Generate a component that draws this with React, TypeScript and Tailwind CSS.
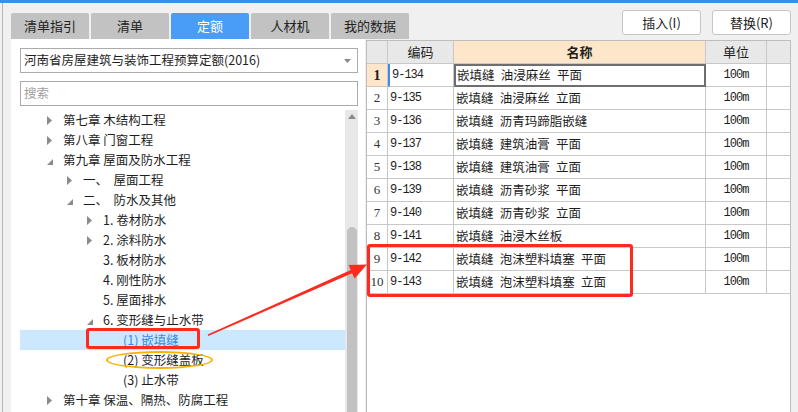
import React from "react";

const tabs = ["清单指引", "清单", "定额", "人材机", "我的数据"];

type Node = { level: 1 | 2 | 3 | 4; text: string; state?: "open" | "closed"; selected?: boolean };

const tree: Node[] = [
  { level: 1, text: "第七章 木结构工程", state: "closed" },
  { level: 1, text: "第八章 门窗工程", state: "closed" },
  { level: 1, text: "第九章 屋面及防水工程", state: "open" },
  { level: 2, text: "一、  屋面工程", state: "closed" },
  { level: 2, text: "二、  防水及其他", state: "open" },
  { level: 3, text: "1. 卷材防水", state: "closed" },
  { level: 3, text: "2. 涂料防水", state: "closed" },
  { level: 3, text: "3. 板材防水" },
  { level: 3, text: "4. 刚性防水" },
  { level: 3, text: "5. 屋面排水" },
  { level: 3, text: "6. 变形缝与止水带", state: "open" },
  { level: 4, text: "(1) 嵌填缝", selected: true },
  { level: 4, text: "(2) 变形缝盖板" },
  { level: 4, text: "(3) 止水带" },
  { level: 1, text: "第十章 保温、隔热、防腐工程", state: "closed" },
];

const indent: Record<number, string> = {
  1: "pl-[24px]",
  2: "pl-[44px]",
  3: "pl-[64px]",
  4: "pl-[84px]",
};

const rows = [
  ["9-134", "嵌填缝 油浸麻丝 平面"],
  ["9-135", "嵌填缝 油浸麻丝 立面"],
  ["9-136", "嵌填缝 沥青玛蹄脂嵌缝"],
  ["9-137", "嵌填缝 建筑油膏 平面"],
  ["9-138", "嵌填缝 建筑油膏 立面"],
  ["9-139", "嵌填缝 沥青砂浆 平面"],
  ["9-140", "嵌填缝 沥青砂浆 立面"],
  ["9-141", "嵌填缝 油浸木丝板"],
  ["9-142", "嵌填缝 泡沫塑料填塞 平面"],
  ["9-143", "嵌填缝 泡沫塑料填塞 立面"],
];

function Toggle({ state }: { state?: "open" | "closed" }) {
  if (state === "closed")
    return (
      <svg width="6" height="9" viewBox="0 0 6 9" className="ml-[3px]">
        <path d="M0 0 L5 4.5 L0 9 Z" fill="#8a8a8a" />
      </svg>
    );
  if (state === "open")
    return (
      <svg width="6" height="6" viewBox="0 0 6 6" className="ml-[3px] mt-[4px]">
        <path d="M6 0 L6 6 L0 6 Z" fill="#8a8a8a" />
      </svg>
    );
  return null;
}

export default function App() {
  return (
    <div className="relative w-[798px] h-[412px] overflow-hidden bg-[#f0f0f0] font-['Noto_Sans_CJK_SC',sans-serif] text-[12px] text-[#1e1e1e]">
      <div className="h-[3px] bg-[#3d8fe6]" />
      <div className="flex h-[409px]">
        <div className="w-[3px] shrink-0 border-r border-[#b4b4b4]" />

        {/* left: library tree */}
        <div className="ml-[8px] w-[354px] shrink-0 flex flex-col">
          <div className="mt-[10px] h-[26px] flex gap-[2px]">
            {tabs.map((t, i) => (
              <div
                key={t}
                className={
                  i === 2
                    ? "w-[78px] shrink-0 rounded-t-[2px] bg-[#4a9df6] text-white text-[13px] flex items-center justify-center"
                    : "w-[78px] shrink-0 rounded-t-[2px] bg-[#c2c2c2] text-[#222] text-[13px] flex items-center justify-center"
                }
              >
                {t}
              </div>
            ))}
          </div>
          <div className="flex-1 bg-white pt-[9px] pl-[9px] pr-[7px] flex flex-col">
            <div className="h-[25px] border border-[#ababab] flex items-center justify-between pl-[3px] pr-[6px] text-[12.5px]">
              <span>河南省房屋建筑与装饰工程预算定额(2016)</span>
              <svg width="7" height="4" viewBox="0 0 7 4">
                <path d="M0 0 L7 0 L3.5 4 Z" fill="#888" />
              </svg>
            </div>
            <div className="mt-[8px] h-[25px] border border-[#ababab] flex items-center pl-[3px] text-[#a0a0a0] text-[12.5px]">
              搜索
            </div>
            <div className="mt-[4px] flex flex-1">
              <div className="w-[325px] text-[12.5px]">
                {tree.map((n) => (
                  <div
                    key={n.text}
                    className={
                      "h-[20px] flex items-center " +
                      indent[n.level] +
                      (n.selected ? " bg-[#cce8ff] text-[#3b8ae4]" : "")
                    }
                  >
                    <div className="w-[19px] h-[20px] flex items-center">
                      <Toggle state={n.state} />
                    </div>
                    <span className="whitespace-pre">{n.text}</span>
                  </div>
                ))}
              </div>
              <div className="w-[13px] bg-[#e8e8e8] flex flex-col items-center">
                <svg width="8" height="5" viewBox="0 0 8 5" className="mt-[4px]">
                  <path d="M0 5 L4 0 L8 5 Z" fill="#8a8a8a" />
                </svg>
                <div className="mt-[108px] w-[10px] flex-1 rounded-t-full bg-[#c2c2c2]" />
              </div>
            </div>
          </div>
        </div>

        {/* right: quota list */}
        <div className="ml-[1px] w-[425px] shrink-0 flex flex-col">
          <div className="mt-[7px] h-[25px] flex justify-end gap-[11px]">
            {["插入(I)", "替换(R)"].map((b) => (
              <div
                key={b}
                className="w-[79px] h-[25px] bg-white border border-[#c6c6c6] rounded-[3px] flex items-center justify-center text-[13px] text-[#222]"
              >
                {b}
              </div>
            ))}
          </div>
          <div className="mt-[5px] flex-1 bg-white border-l border-r border-t border-[#bdbdbd]">
            <div className="flex h-[23px] text-[13px]">
              <div className="w-[21px] bg-[#e8e8e8] border-r border-b border-[#c8c8c8]" />
              <div className="w-[66px] bg-[#e8e8e8] border-r border-b border-[#c8c8c8] flex items-center justify-center">编码</div>
              <div className="w-[252px] bg-[#fde6c9] border-r border-b border-[#c8c8c8] flex items-center justify-center font-bold">名称</div>
              <div className="w-[61px] bg-[#e8e8e8] border-r border-b border-[#c8c8c8] flex items-center justify-center">单位</div>
              <div className="w-[23px] bg-[#e8e8e8] border-b border-[#c8c8c8]" />
            </div>
            {rows.map(([code, name], i) => (
              <div key={code} className="flex h-[23px]">
                <div
                  className={
                    i === 0
                      ? "w-[21px] bg-[#fde6c9] border-r border-b border-[#c8c8c8] flex items-center justify-center font-['Liberation_Serif',serif] font-bold text-[14px]"
                      : "w-[21px] border-r border-b border-[#c8c8c8] flex items-center justify-center font-['Liberation_Serif',serif] text-[13px] text-[#333]"
                  }
                >
                  {i + 1}
                </div>
                <div
                  className={
                    "w-[66px] border-r border-b border-[#c8c8c8] flex items-center pl-[2px] font-['Liberation_Mono',monospace] text-[12px] tracking-[-1px]" +
                    (i === 0 ? " border-l-2 border-l-[#3b8ef0]" : "")
                  }
                >
                  {code}
                </div>
                <div
                  className={
                    i === 0
                      ? "w-[252px] border-2 border-[#6e6e6e] flex items-center pl-[1px] text-[12.5px]"
                      : "w-[252px] border-r border-b border-[#c8c8c8] flex items-center pl-[2px] text-[12.5px]"
                  }
                >
                  <span className="whitespace-pre">{name.replace(/ /g, "\u2002")}</span>
                </div>
                <div className="w-[61px] border-r border-b border-[#c8c8c8] flex items-center justify-center font-['Liberation_Mono',monospace] text-[12px] tracking-[-1px]">
                  100m
                </div>
                <div className="w-[23px] border-b border-[#c8c8c8]" />
              </div>
            ))}
          </div>
        </div>
      </div>

      {/* annotations */}
      <div className="absolute left-[86px] top-[328px] w-[114px] h-[21px] border-[3px] border-[#ff2a1f] rounded-[3px]" />
      <div className="absolute left-[106px] top-[351px] w-[107px] h-[18px] border-2 border-[#f6b400] rounded-[50%]" />
      <div className="absolute left-[367px] top-[244px] w-[266px] h-[53px] border-[3px] border-[#ff2a1f] rounded-[3px]" />
      <svg className="absolute left-0 top-0 pointer-events-none" width="798" height="412">
        <polygon
          points="208.3,336 352.1,273.3 354.6,278.4 367,264.5 348.6,265 350.8,270 207.7,334.6"
          fill="#ff2a1f"
        />
      </svg>
    </div>
  );
}
